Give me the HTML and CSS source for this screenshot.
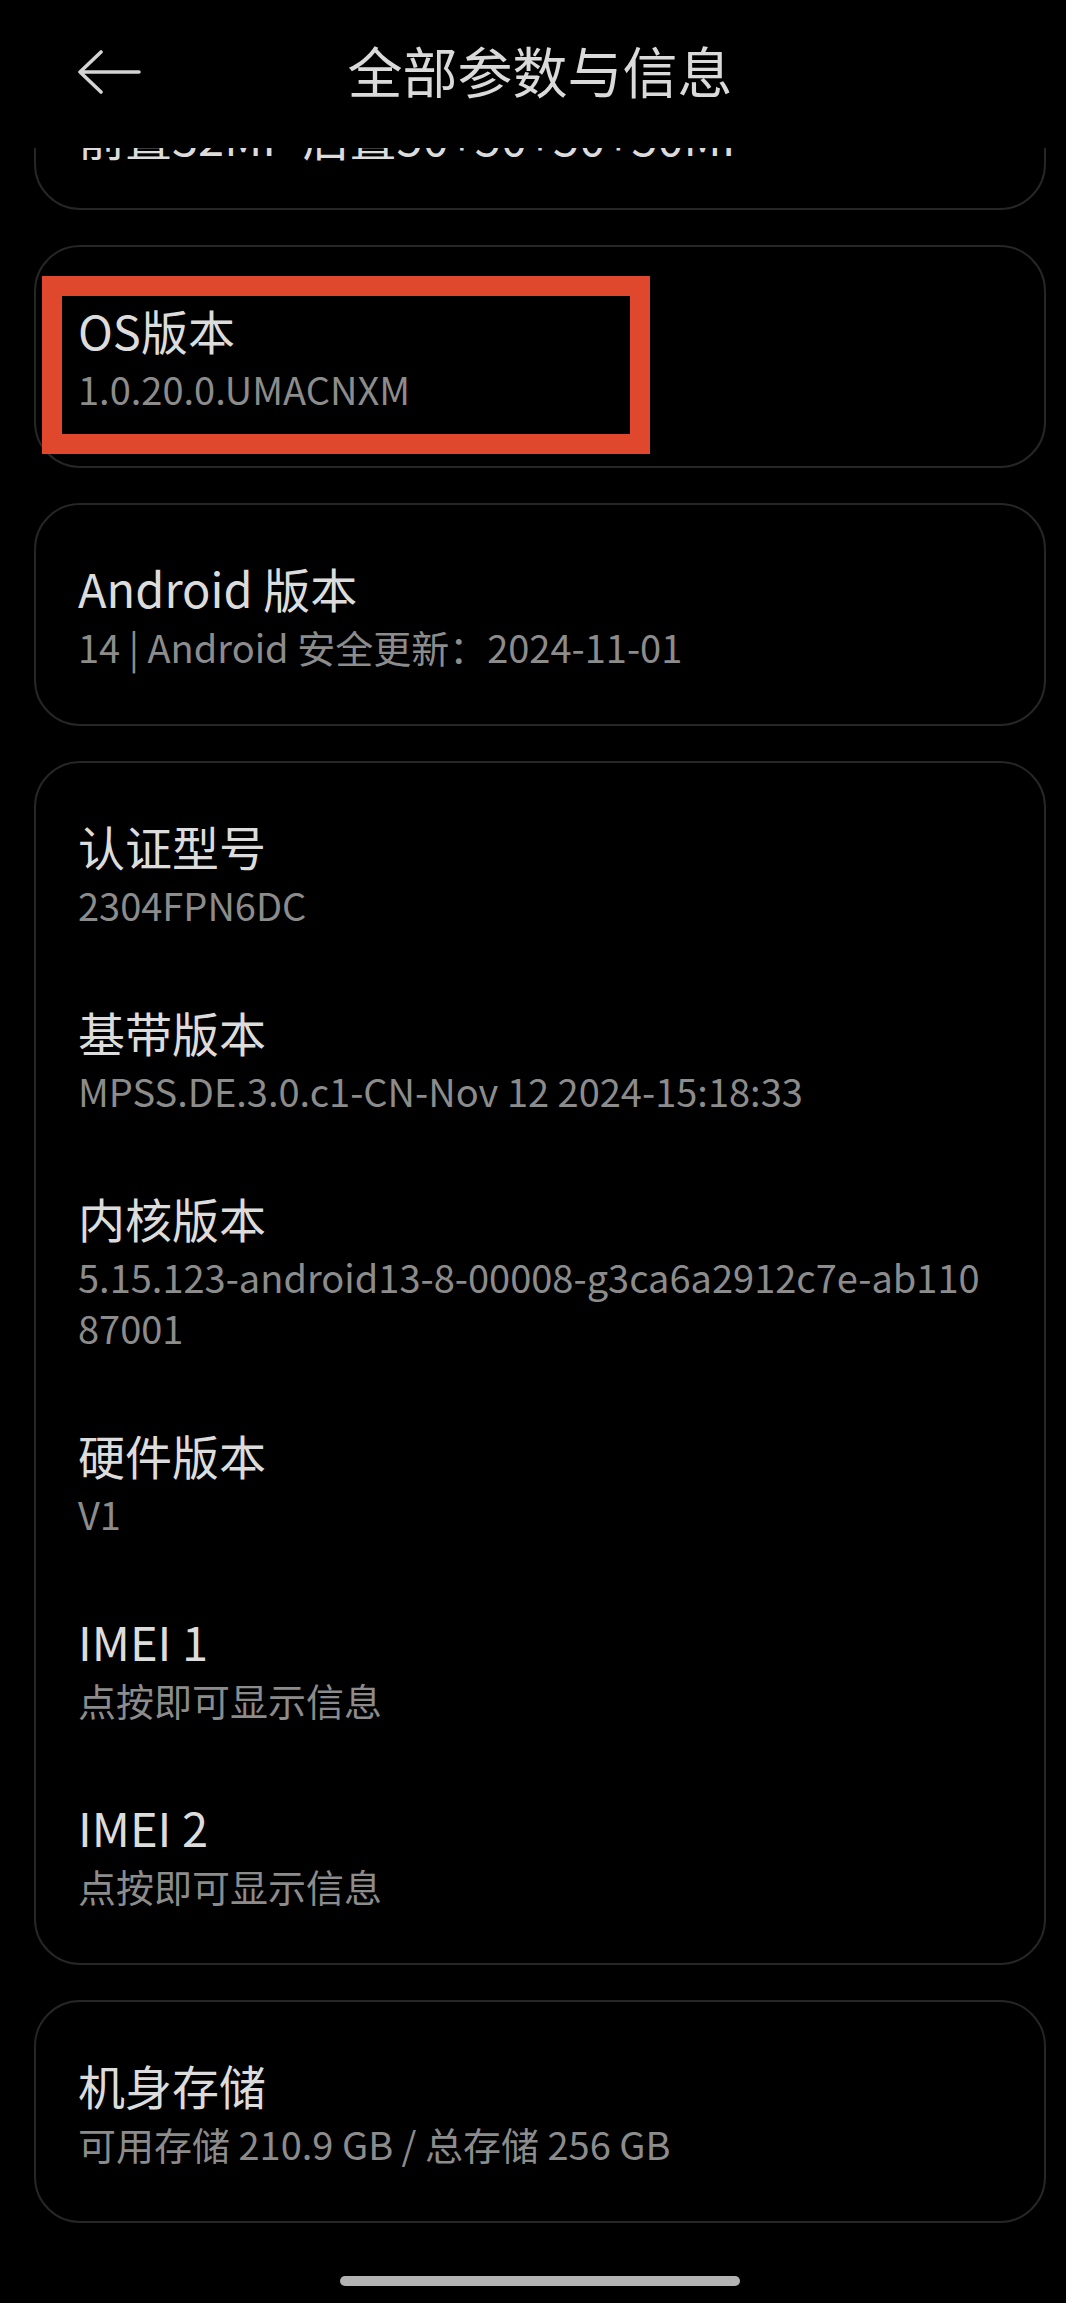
FILE: index.html
```html
<!DOCTYPE html>
<html lang="zh-CN">
<head>
<meta charset="utf-8">
<title>全部参数与信息</title>
<link rel="stylesheet" href="styles.css">
</head>
<body>
<div class="screen">
  <header class="topbar">
    <button class="back" aria-label="返回">
      <svg width="64" height="44" viewBox="0 0 64 44" aria-hidden="true"><path d="M62 22H3M24 2L3 22l21 20" fill="none" stroke="#d4d4d4" stroke-width="3.6" stroke-linecap="round" stroke-linejoin="round"/></svg>
    </button>
    <h1 class="page-title">全部参数与信息</h1>
    <span class="spacer"></span>
  </header>

  <main class="list">
    <section class="card card-partial">
      <p class="item-title">前置32MP 后置50+50+50+50MP</p>
    </section>

    <section class="card">
      <div class="item">
        <p class="item-title">OS版本</p>
        <p class="item-value">1.0.20.0.UMACNXM</p>
      </div>
      <div class="mark"></div>
    </section>

    <section class="card">
      <div class="item">
        <p class="item-title">Android 版本</p>
        <p class="item-value">14 | Android 安全更新：2024-11-01</p>
      </div>
    </section>

    <section class="card">
      <div class="item">
        <p class="item-title">认证型号</p>
        <p class="item-value">2304FPN6DC</p>
      </div>
      <div class="item">
        <p class="item-title">基带版本</p>
        <p class="item-value">MPSS.DE.3.0.c1-CN-Nov 12 2024-15:18:33</p>
      </div>
      <div class="item">
        <p class="item-title">内核版本</p>
        <p class="item-value nowrap">5.15.123-android13-8-00008-g3ca6a2912c7e-ab110<br>87001</p>
      </div>
      <div class="item">
        <p class="item-title">硬件版本</p>
        <p class="item-value">V1</p>
      </div>
      <div class="item">
        <p class="item-title">IMEI 1</p>
        <p class="item-value">点按即可显示信息</p>
      </div>
      <div class="item">
        <p class="item-title">IMEI 2</p>
        <p class="item-value">点按即可显示信息</p>
      </div>
    </section>

    <section class="card">
      <div class="item">
        <p class="item-title">机身存储</p>
        <p class="item-value">可用存储 210.9 GB / 总存储 256 GB</p>
      </div>
    </section>
  </main>

  <div class="home-bar"></div>
</div>
</body>
</html>
```

FILE: styles.css
```css
html, body {
  margin: 0;
  padding: 0;
  background: #000;
}

body {
  font-family: "Noto Sans CJK SC", "Noto Sans", sans-serif;
  color: #dcdcdc;
  overflow: hidden;
}

.screen {
  padding: 0 20px 0 34px;
  min-height: 2303px;
  box-sizing: border-box;
}

.topbar {
  position: sticky;
  top: 0;
  z-index: 2;
  background: #000;
  height: 148px;
  box-sizing: border-box;
  padding-top: 34px;
  display: grid;
  grid-template-columns: 1fr auto 1fr;
  align-items: start;
}

.back {
  justify-self: start;
  margin: 16px 0 0 43px;
  padding: 0;
  border: 0;
  background: none;
  display: block;
  line-height: 0;
}

.page-title {
  margin: 0;
  font-size: 55px;
  line-height: 70px;
  font-weight: 400;
  color: #dadada;
  white-space: nowrap;
}

.list {
  display: flex;
  flex-direction: column;
  gap: 35px;
}

.card {
  position: relative;
  border: 2px solid #262626;
  border-radius: 46px;
  padding: 53px 42px 52px;
}

.card-partial {
  margin-top: -97px;
  padding-bottom: 42px;
}

.item + .item {
  margin-top: 72px;
}

.item-title {
  margin: 0;
  font-size: 47px;
  line-height: 60px;
  font-weight: 400;
  color: #dcdcdc;
}

.item-value {
  margin: 3px 0 0;
  font-size: 38px;
  line-height: 51px;
  color: #8c8c8c;
}

.nowrap {
  white-space: nowrap;
}

.mark {
  position: absolute;
  left: 6px;
  top: 29px;
  width: 608px;
  height: 178px;
  box-sizing: border-box;
  border: 20px solid #e0482d;
}

.home-bar {
  width: 400px;
  height: 10px;
  border-radius: 5px;
  background: #b3b3b3;
  margin: 53px auto 0;
}
```
